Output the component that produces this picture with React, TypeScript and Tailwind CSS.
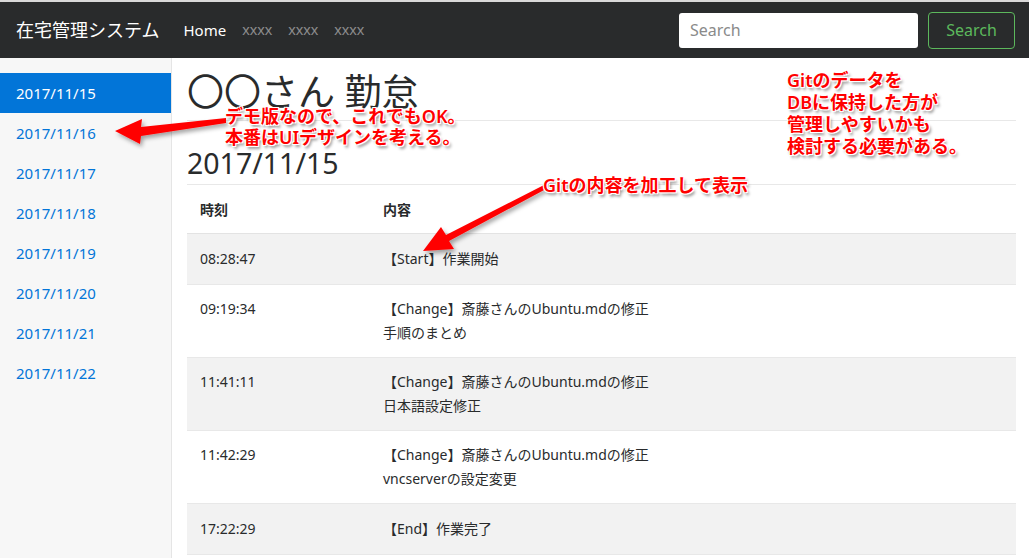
const font = {
  fontFamily: '"Noto Sans", "Noto Sans CJK JP", sans-serif',
};

const dates = [
  "2017/11/15",
  "2017/11/16",
  "2017/11/17",
  "2017/11/18",
  "2017/11/19",
  "2017/11/20",
  "2017/11/21",
  "2017/11/22",
];

const rows = [
  { time: "08:28:47", lines: ["【Start】作業開始"] },
  { time: "09:19:34", lines: ["【Change】斎藤さんのUbuntu.mdの修正", "手順のまとめ"] },
  { time: "11:41:11", lines: ["【Change】斎藤さんのUbuntu.mdの修正", "日本語設定修正"] },
  { time: "11:42:29", lines: ["【Change】斎藤さんのUbuntu.mdの修正", "vncserverの設定変更"] },
  { time: "17:22:29", lines: ["【End】作業完了"] },
];

const note =
  "absolute text-[18px] leading-[21px] text-[#ff0000] font-semibold whitespace-pre [text-shadow:-1px_-1px_0_#fff,1px_-1px_0_#fff,-1px_1px_0_#fff,1px_1px_0_#fff,2px_3px_3px_rgba(0,0,0,0.45)]";

const xx = { fontFamily: '"Liberation Sans", sans-serif' };

const App = () => {
  return (
    <div className="relative w-[1029px] h-[558px] overflow-hidden bg-white text-[#292b2c]" style={font}>
      <div className="h-[2px] bg-[#d9d9d9]" />
      <nav className="h-[56px] bg-[#292b2c] flex items-center pl-4 pr-[14px]">
        <span className="text-white text-[18px]">在宅管理システム</span>
        <div className="flex items-center ml-[24px] gap-[16px]">
          <span className="text-white text-[15px]">Home</span>
          <span className="text-[#8c8c8c] text-[15px]" style={xx}>xxxx</span>
          <span className="text-[#8c8c8c] text-[15px]" style={xx}>xxxx</span>
          <span className="text-[#8c8c8c] text-[15px]" style={xx}>xxxx</span>
        </div>
        <div className="ml-auto flex items-center gap-[10px]">
          <input
            className="w-[239px] h-[35px] rounded-[3px] bg-white px-[11px] text-[16px] placeholder:text-[#8a8a8a] outline-none"
            placeholder="Search"
          />
          <button className="w-[87px] h-[37px] rounded-[4px] border border-[#5cb85c] text-[#5cb85c] text-[16px]">
            Search
          </button>
        </div>
      </nav>
      <div className="flex h-[500px]">
        <aside className="w-[172px] shrink-0 bg-[#f7f7f7] border-r border-[#e5e5e5] pt-[15px]">
          {dates.map((d, i) => (
            <div
              key={d}
              className={
                i === 0
                  ? "h-[40px] flex items-center pl-4 text-[15px] bg-[#0275d8] text-white"
                  : "h-[40px] flex items-center pl-4 text-[15px] text-[#0275d8]"
              }
            >
              {d}
            </div>
          ))}
        </aside>
        <main className="flex-1 pl-[15px] pr-[13px]">
          <h1 className="h-[63px] flex items-end pb-[10px] text-[37px] leading-none border-b border-[#e8e8e8]">
            〇〇さん 勤怠
          </h1>
          <h2 className="h-[64px] flex items-end pb-[7px] text-[28.5px] leading-none border-b border-[#e8e8e8]">
            2017/11/15
          </h2>
          <div className="text-[14px]">
            <div className="flex h-[49px] items-center font-bold border-b border-[#e3e3e3]">
              <div className="w-[196px] pl-[13px]">時刻</div>
              <div>内容</div>
            </div>
            {rows.map((r, i) => (
              <div
                key={r.time}
                className={[
                  "flex leading-6 border-b border-[#e8e8e8]",
                  i % 2 === 0 ? "bg-[#f2f2f2]" : "bg-white",
                  r.lines.length === 1 ? "py-[13px]" : "py-[12px]",
                ].join(" ")}
              >
                <div className="w-[196px] pl-[13px]">{r.time}</div>
                <div>
                  {r.lines.map((l) => (
                    <div key={l}>{l}</div>
                  ))}
                </div>
              </div>
            ))}
          </div>
        </main>
      </div>

      <svg className="absolute inset-0 pointer-events-none" width="1029" height="558">
        <defs>
          <filter id="sh" x="-20%" y="-20%" width="140%" height="140%">
            <feDropShadow dx="2" dy="3" stdDeviation="2" floodColor="#000" floodOpacity="0.35" />
          </filter>
        </defs>
        <polygon
          points="115,131 142,119 141,127 226,118 226,123 141,136 140,144"
          fill="#ff0000"
          filter="url(#sh)"
        />
        <polygon
          points="423,251 441,227 446,235 544,185 546,189 449,241 454,249"
          fill="#ff0000"
          filter="url(#sh)"
        />
      </svg>

      <div className={note} style={{ left: 225, top: 106 }}>
        {"デモ版なので、これでもOK。\n本番はUIデザインを考える。"}
      </div>
      <div className={note + " text-[18.5px] leading-[22px]"} style={{ left: 787, top: 69 }}>
        {"Gitのデータを\nDBに保持した方が\n管理しやすいかも\n検討する必要がある。"}
      </div>
      <div className={note} style={{ left: 543, top: 175 }}>
        {"Gitの内容を加工して表示"}
      </div>
    </div>
  );
};

export default App;
